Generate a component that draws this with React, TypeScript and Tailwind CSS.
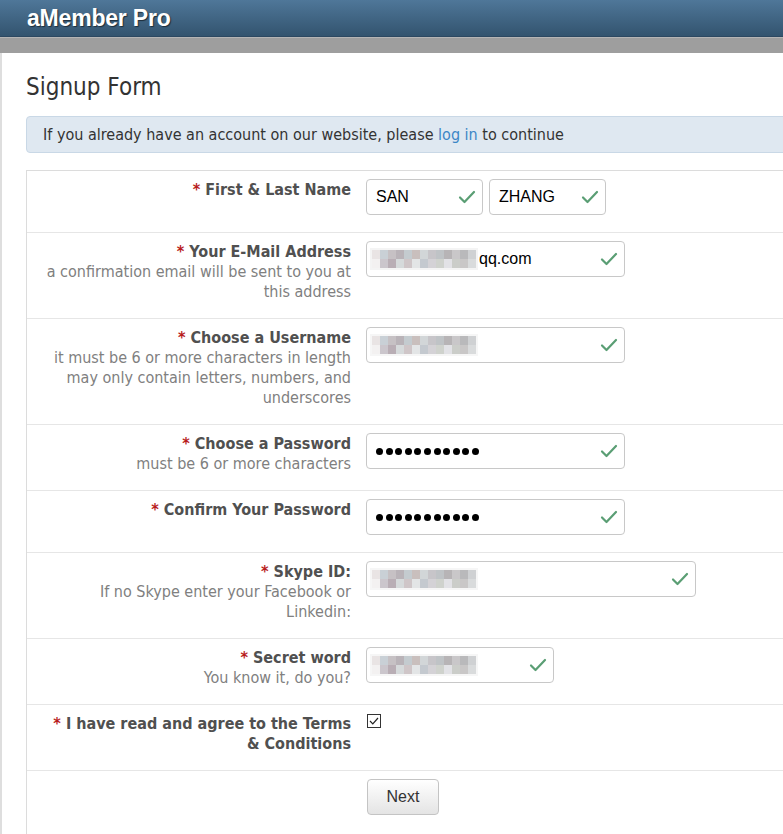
import React from "react";

const Check = () => (
  <svg width="18" height="14" viewBox="0 0 18 14" className="shrink-0">
    <polyline points="2,7.5 6.5,12 16,2" fill="none" stroke="#5a9e74" strokeWidth="2.2" strokeLinecap="round" strokeLinejoin="round" />
  </svg>
);

const mosaicColors = [
  ["#e9e4e4", "#c9d0d6", "#c6c1c4", "#b9b3b8", "#c4cbcf", "#c9bfbd", "#d2d6d8", "#c7c5c9", "#bfc3c6", "#b7b4b6", "#c9c7c9", "#b9b9bb", "#cfd1d3"],
  ["#f3f1f1", "#cbc6cc", "#b9aeb5", "#d6dadb", "#cfc6c8", "#e3e5e6", "#c4c9cf", "#d4d2d6", "#cfd2cd", "#e2e2e6", "#cbcdc9", "#c9c7c7", "#d9dbdc"],
];

const Mosaic = ({ cols = 13 }: { cols?: number }) => (
  <div className="flex flex-col">
    {mosaicColors.map((row, i) => (
      <div key={i} className="flex">
        {row.slice(0, cols).map((c, j) => (
          <span key={j} className="block w-[8px] h-[9px]" style={{ backgroundColor: c }} />
        ))}
      </div>
    ))}
  </div>
);

const Dots = () => (
  <div className="flex gap-[2.6px]">
    {Array.from({ length: 11 }).map((_, i) => (
      <span key={i} className="block w-[7px] h-[7px] rounded-full bg-black" />
    ))}
  </div>
);

const Field = ({ w, children }: { w: string; children?: React.ReactNode }) => (
  <div className={`${w} h-[36px] border border-[#c8c8c8] rounded-[4px] bg-white flex items-center justify-between pl-[9px] pr-[6px] font-['Liberation_Sans',Arial,sans-serif] text-[16px] text-black`}>
    <div className="flex items-center">{children}</div>
    <Check />
  </div>
);

const Row = ({
  label,
  desc,
  children,
  last,
}: {
  label: React.ReactNode;
  desc?: React.ReactNode;
  children: React.ReactNode;
  last?: boolean;
}) => (
  <div className={`flex pt-[8px] pb-[17px] ${last ? "" : "border-b border-[#e6e6e6]"}`}>
    <div className="w-[324px] pt-[1px] -mb-[1px] text-right leading-[20px] text-[16px]">
      <div className="font-bold text-[#505050]">
        <span className="text-[#b81c1c]">*</span> {label}
      </div>
      {desc && <div className="text-[#808080]">{desc}</div>}
    </div>
    <div className="ml-[15px] flex gap-[6px]">{children}</div>
  </div>
);

export default function App() {
  return (
    <div className="w-[783px] h-[834px] overflow-hidden bg-white font-['DejaVu_Sans_Condensed','DejaVu_Sans',sans-serif]">
      <div className="h-[37px] bg-gradient-to-b from-[#4f7799] to-[#33546f] flex items-center pl-[27px] border-b border-[#2c4861]">
        <span className="text-white font-bold text-[23px] font-['Liberation_Sans',Arial,sans-serif] tracking-[-0.2px] [text-shadow:1px_1px_1px_#1d2d3a]">
          aMember Pro
        </span>
      </div>
      <div className="h-[16px] bg-[#9e9e9e] border-t border-[#b5b5b5]" />
      <div className="border-l-2 border-[#dedede] pl-[24px] w-[820px] h-full">
        <h1 className="text-[24px] text-[#333] pt-[18px] leading-[32px] font-normal">Signup Form</h1>
        <div className="mt-[13px] h-[37px] rounded-[4px] bg-[#dfe8f1] border border-[#c9d8e6] flex items-center pl-[16px] text-[16px] text-[#333]">
          <span>
            If you already have an account on our website, please{" "}
            <span className="text-[#3c86c6]">log in</span> to continue
          </span>
        </div>
        <div className="mt-[17px] border border-[#dcdcdc]">
          <Row label="First & Last Name">
            <Field w="w-[117px]">SAN</Field>
            <Field w="w-[117px]">ZHANG</Field>
          </Row>
          <Row label="Your E-Mail Address" desc={<>a confirmation email will be sent to you at<br />this address</>}>
            <Field w="w-[259px]">
              <div className="-ml-[6px] mr-[1px] bg-[#f4f4f4] p-[2px]"><Mosaic /></div>
              <span>qq.com</span>
            </Field>
          </Row>
          <Row
            label="Choose a Username"
            desc={<>it must be 6 or more characters in length<br />may only contain letters, numbers, and<br />underscores</>}
          >
            <Field w="w-[259px]">
              <div className="-ml-[6px] bg-[#f6f6f6] p-[2px]"><Mosaic /></div>
            </Field>
          </Row>
          <Row label="Choose a Password" desc="must be 6 or more characters">
            <Field w="w-[259px]"><Dots /></Field>
          </Row>
          <Row label="Confirm Your Password">
            <Field w="w-[259px]"><Dots /></Field>
          </Row>
          <Row label="Skype ID:" desc={<>If no Skype enter your Facebook or<br />Linkedin:</>}>
            <Field w="w-[330px]">
              <div className="-ml-[6px] bg-[#f6f6f6] p-[2px]"><Mosaic /></div>
            </Field>
          </Row>
          <Row label="Secret word" desc="You know it, do you?">
            <Field w="w-[188px]">
              <div className="-ml-[6px] bg-[#f6f6f6] p-[2px]"><Mosaic /></div>
            </Field>
          </Row>
          <Row label={<>I have read and agree to the Terms<br />&amp; Conditions</>}>
            <div className="mt-[1px] ml-[1px] w-[14px] h-[14px] border border-[#333] bg-white flex items-center justify-center">
              <svg width="10" height="8" viewBox="0 0 10 8">
                <polyline points="1,4 3.8,6.8 9,1" fill="none" stroke="#222" strokeWidth="1.2" />
              </svg>
            </div>
          </Row>
          <div className="flex pt-[8px] pb-[20px]">
            <div className="w-[324px]" />
            <div className="ml-[16px]">
              <button className="w-[72px] h-[36px] rounded-[4px] border border-[#c4c4c4] bg-gradient-to-b from-[#ffffff] to-[#e4e4e4] text-[16px] text-[#333] font-['Liberation_Sans',Arial,sans-serif]">
                Next
              </button>
            </div>
          </div>
        </div>
      </div>
    </div>
  );
}
